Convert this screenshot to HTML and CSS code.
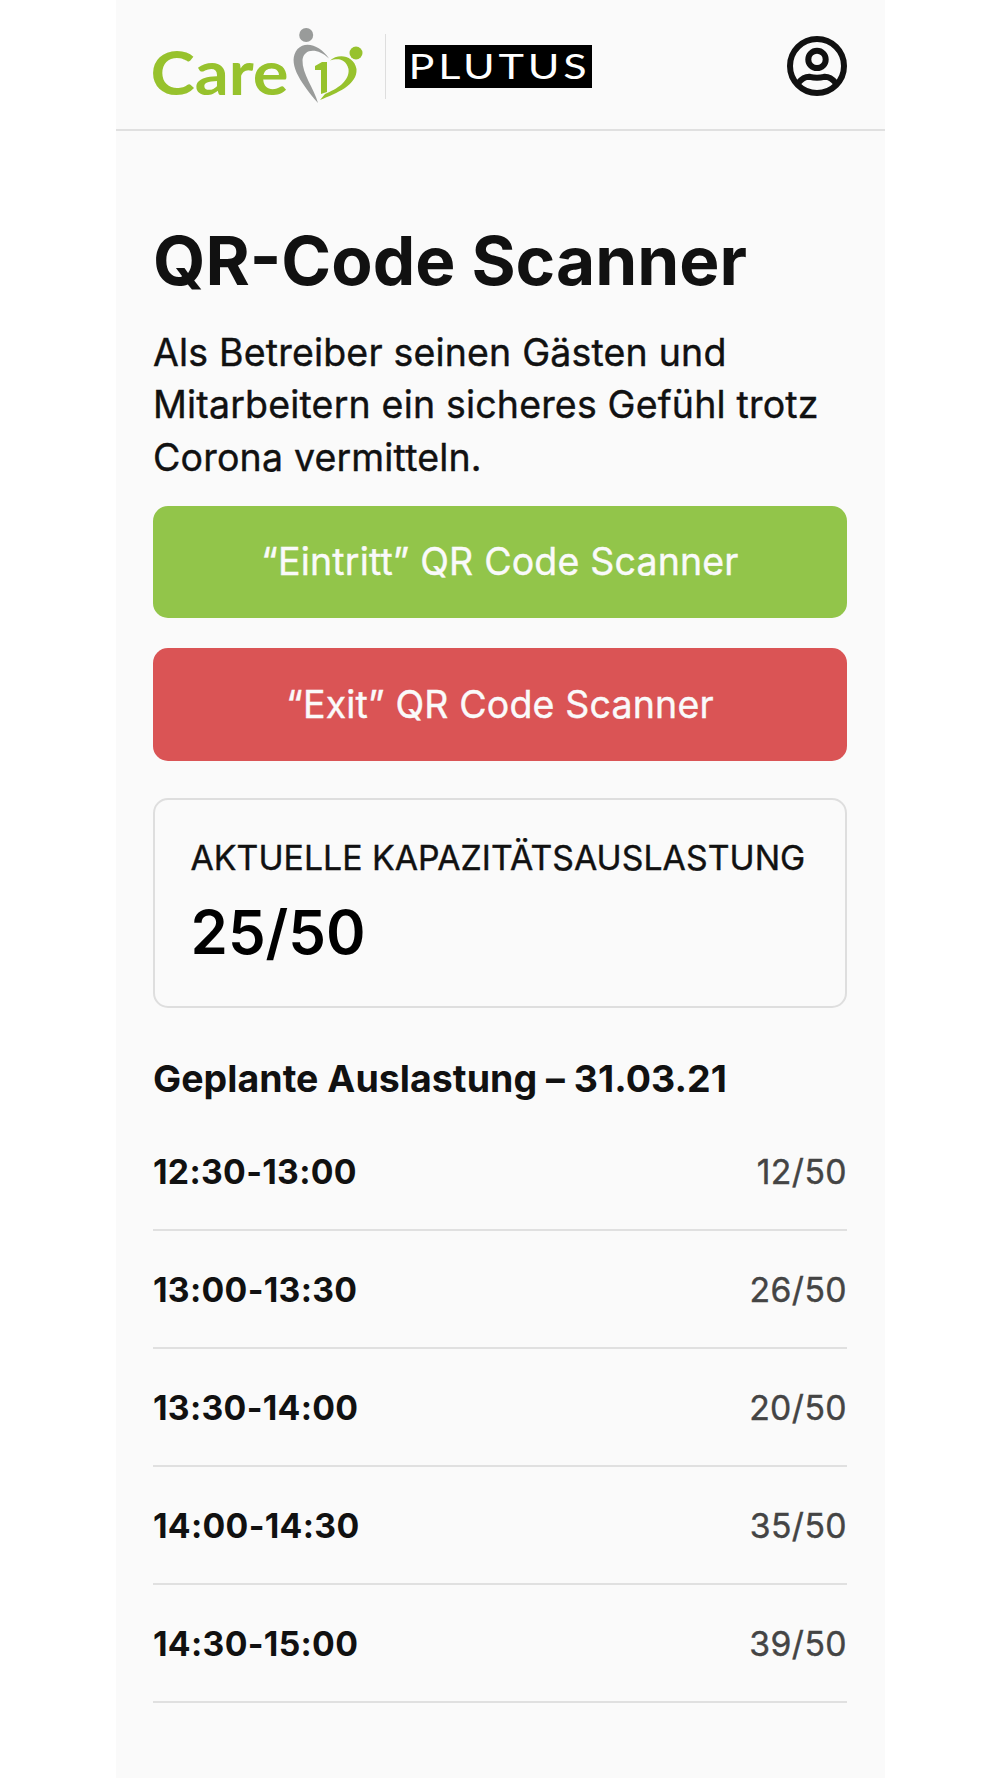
FILE: index.html
```html
<!DOCTYPE html>
<html lang="de">
<head>
  <meta charset="UTF-8">
  <meta name="viewport" content="width=device-width, initial-scale=1.0">
  <title>QR-Code Scanner</title>
  <link rel="stylesheet" href="styles.css">
</head>
<body>
  <div class="app">
    <header class="header">
      <svg class="logo" viewBox="0 0 212 80" width="212" height="80">
        <text class="logo-text" x="-2.500" y="70.500" textLength="138" lengthAdjust="spacingAndGlyphs">Care</text>
        <!-- grey figure -->
        <circle cx="153.2" cy="11" r="7" fill="#999b9a"/>
        <path fill="#999b9a" d="M176 34.500C168 22 153 16 144.500 25C134 38 146 57 165 79C161 64 149 50 149.500 36C150.500 25 164 23 176 34.500Z"/>
        <!-- green figure -->
        <circle cx="203" cy="29" r="6.500" fill="#97c22d"/>
        <path fill="#97c22d" d="M177 36.500C185 29 201 31 203.500 45C204.500 61 184 69 167 76L172 70C184 65 197 57 195.500 45C193 34 184 34 177 36.500Z"/>
        <path fill="#97c22d" d="M162 42L169 38H174V68L168 70V46H162Z"/>
      </svg>
      <div class="divider"></div>
      <svg class="partner" viewBox="0 0 187 43" width="187" height="43">
        <rect width="187" height="43" fill="#000"/>
        <text class="partner-text" x="3.500" y="33.500" textLength="182" lengthAdjust="spacingAndGlyphs">PLUTUS</text>
      </svg>
      <svg class="account" viewBox="2 2 20 20" width="60" height="60" fill="none" stroke="#111" stroke-width="2">
        <circle cx="12" cy="12" r="9"/>
        <circle cx="12" cy="9.800" r="2.900"/>
        <path d="M5.700 17.700C6.800 16.400 8.200 15.500 9.600 15.600C10.800 15.900 13.200 15.900 14.400 15.600C15.800 15.500 17.200 16.400 18.300 17.700"/>
      </svg>
    </header>

    <main class="content">
      <h1>QR-Code Scanner</h1>
      <p class="intro">Als Betreiber seinen Gästen und Mitarbeitern ein sicheres Gefühl trotz Corona vermitteln.</p>

      <button class="btn btn-enter">“Eintritt” QR Code Scanner</button>
      <button class="btn btn-exit">“Exit” QR Code Scanner</button>

      <div class="card">
        <div class="card-label">AKTUELLE KAPAZITÄTSAUSLASTUNG</div>
        <div class="card-value">25/50</div>
      </div>

      <h2>Geplante Auslastung – 31.03.21</h2>
      <ul class="slots">
        <li><span class="time">12:30-13:00</span><span class="count">12/50</span></li>
        <li><span class="time">13:00-13:30</span><span class="count">26/50</span></li>
        <li><span class="time">13:30-14:00</span><span class="count">20/50</span></li>
        <li><span class="time">14:00-14:30</span><span class="count">35/50</span></li>
        <li><span class="time">14:30-15:00</span><span class="count">39/50</span></li>
      </ul>
    </main>
  </div>
</body>
</html>
```
FILE: styles.css
```css
* {
  box-sizing: border-box;
}

body {
  margin: 0;
  background: #fff;
  color: #111;
  font-family: Inter, sans-serif;
}

.app {
  width: 769px;
  height: 1778px;
  margin: 0 auto;
  background: #fafafa;
  overflow: hidden;
}

.header {
  display: flex;
  align-items: flex-start;
  height: 131px;
  padding: 0 37.5px;
  border-bottom: 2px solid #e0e0e0;
}

.logo {
  margin-top: 24px;
  overflow: visible;
}

.logo-text {
  font-family: Lato, sans-serif;
  font-weight: 700;
  font-size: 61px;
  fill: #97c22d;
}

.divider {
  width: 1px;
  height: 65px;
  margin: 34px 19px 0 20px;
  background: #dedede;
}

.partner {
  margin-top: 45px;
}

.partner-text {
  font-family: Lato, sans-serif;
  font-weight: 400;
  font-size: 34px;
  letter-spacing: 3px;
  fill: #fff;
}

.account {
  margin: 35.5px 0 0 auto;
}

.content {
  padding: 90px 37.5px 0;
}

h1 {
  margin: 0;
  font-size: 67.5px;
  font-weight: 700;
  line-height: 80px;
  white-space: nowrap;
}

.intro {
  margin: 25.5px 0 21.5px;
  font-size: 37.5px;
  line-height: 52.5px;
  letter-spacing: 0.18px;
  -webkit-text-stroke: 0.4px;
}

.btn {
  display: block;
  width: 100%;
  height: 112.5px;
  border: none;
  border-radius: 15px;
  color: #fafafa;
  font-family: inherit;
  font-size: 37.5px;
  letter-spacing: 0.17px;
  -webkit-text-stroke: 0.4px;
  cursor: pointer;
}

.btn-enter {
  background: #92c54a;
  margin-bottom: 30px;
}

.btn-exit {
  background: #da5455;
}

.card {
  height: 210px;
  margin-top: 37px;
  padding: 34px 35.5px;
  border: 2px solid #dedede;
  border-radius: 15px;
}

.card-label {
  font-size: 33.75px;
  line-height: 47px;
  letter-spacing: 0.05px;
  white-space: nowrap;
  -webkit-text-stroke: 0.4px;
}

.card-value {
  margin-top: 15px;
  color: #000;
  font-size: 60px;
  font-weight: 600;
  line-height: 72px;
}

h2 {
  margin: 45px 0 0;
  font-size: 37.5px;
  font-weight: 700;
  line-height: 52px;
  letter-spacing: 0.04px;
}

.slots {
  margin: 8px 0 0;
  padding: 0;
  list-style: none;
}

.slots li {
  display: flex;
  justify-content: space-between;
  align-items: center;
  height: 118px;
  padding-top: 1px;
  border-bottom: 2px solid #e0e0e0;
  font-size: 33.75px;
}

.time {
  font-weight: 700;
  letter-spacing: 0.3px;
}

.count {
  color: #444;
  letter-spacing: 0.4px;
  -webkit-text-stroke: 0.4px;
}
```
